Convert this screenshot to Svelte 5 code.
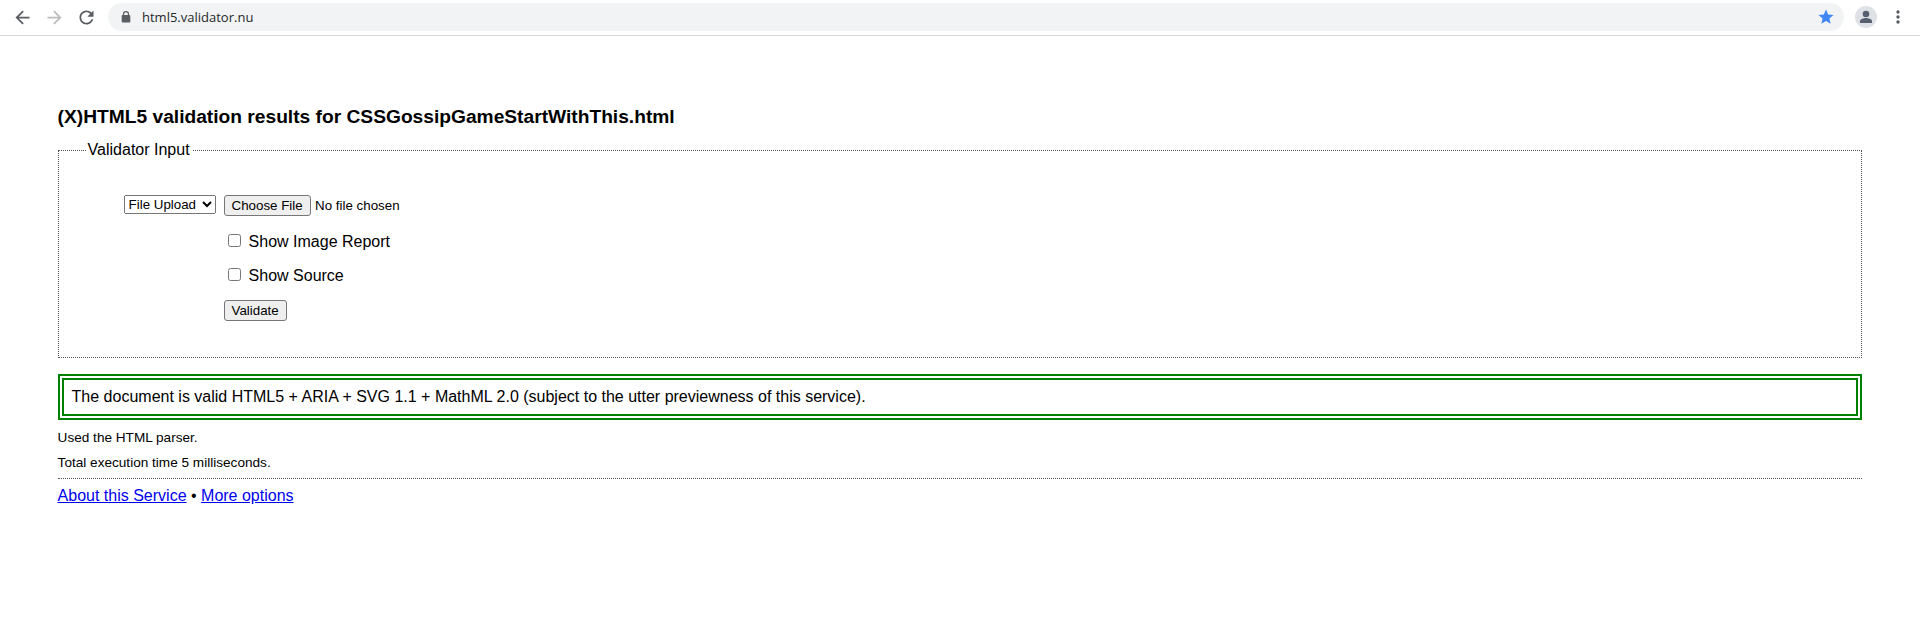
<script>
  let mode = $state('File Upload');
  let imageReport = $state(false);
  let source = $state(false);
</script>

<header class="toolbar">
  <svg class="nav" viewBox="0 0 24 24"><path d="M20 11H7.83l5.59-5.59L12 4l-8 8 8 8 1.41-1.41L7.83 13H20v-2z" /></svg>
  <svg class="nav off" viewBox="0 0 24 24"><path d="M12 4l-1.41 1.41L16.17 11H4v2h12.17l-5.58 5.59L12 20l8-8z" /></svg>
  <svg class="nav" viewBox="0 0 24 24"><path d="M17.65 6.35C16.2 4.9 14.21 4 12 4c-4.42 0-7.99 3.58-7.99 8s3.57 8 7.99 8c3.73 0 6.84-2.55 7.73-6h-2.08c-.82 2.33-3.04 4-5.65 4-3.31 0-6-2.69-6-6s2.69-6 6-6c1.66 0 3.14.69 4.22 1.78L13 11h7V4l-2.35 2.35z" /></svg>
  <div class="omnibox">
    <svg class="lock" viewBox="0 0 10 12"><path d="M1.9 4V3.2a3.1 3.1 0 0 1 6.2 0V4H8.4A.9.9 0 0 1 9.3 4.9v5.7a.9.9 0 0 1-.9.9H1.6a.9.9 0 0 1-.9-.9V4.900a.9.9 0 0 1 .9-.9zM3.100 4h3.800V3.200a1.900 1.900 0 0 0-3.800 0z" /></svg>
    <span class="url">html5.validator.nu</span>
    <svg class="star" viewBox="0 0 24 24"><path d="M12 17.27L18.18 21l-1.64-7.03L22 9.24l-7.19-.61L12 2 9.19 8.63 2 9.24l5.46 4.73L5.82 21z" /></svg>
  </div>
  <svg class="avatar" viewBox="0 0 22 22">
    <circle cx="11" cy="11" r="11" fill="#dee1e6" />
    <circle cx="11" cy="8" r="3.3" fill="#56606f" />
    <path d="M5 17v-1.900C5 12.900 9 12 11 12s6 .9 6 3.100V17z" fill="#56606f" />
  </svg>
  <svg class="more" viewBox="0 0 4 14"><circle cx="2" cy="2" r="1.7" /><circle cx="2" cy="7" r="1.7" /><circle cx="2" cy="12" r="1.7" /></svg>
</header>

<main>
  <h1>(X)HTML5 validation results for CSSGossipGameStartWithThis.html</h1>

  <fieldset>
    <legend>Validator Input</legend>
    <div class="grid">
      <select bind:value={mode}>
        <option>File Upload</option>
      </select>
      <div class="file"><button type="button">Choose File</button><span>No file chosen</span></div>
      <label class="check"><input type="checkbox" bind:checked={imageReport} /><span>Show Image Report</span></label>
      <label class="check"><input type="checkbox" bind:checked={source} /><span>Show Source</span></label>
      <button class="validate" type="button">Validate</button>
    </div>
  </fieldset>

  <p class="success">The document is valid HTML5 + ARIA + SVG 1.1 + MathML 2.0 (subject to the utter previewness of this service).</p>
  <div class="stats">
    <p>Used the HTML parser.</p>
    <p>Total execution time 5 milliseconds.</p>
  </div>
  <hr />
  <p class="links"><a href="#about">About this Service</a> • <a href="#more">More options</a></p>
</main>

<style>
  :global(body) {
    background: #fff;
    color: #000;
    font-family: 'Liberation Sans', Arial, sans-serif;
    font-size: 16px;
  }
  .toolbar {
    display: flex;
    align-items: center;
    box-sizing: border-box;
    height: 36px;
    padding: 0 12px 1px 11.5px;
    border-bottom: 1px solid #d9dbde;
    fill: #5a5e63;
  }
  .nav {
    width: 21px;
    height: 21px;
    margin-right: 11px;
  }
  .nav.off {
    fill: #babcbe;
  }
  .omnibox {
    display: flex;
    align-items: center;
    flex: 1;
    box-sizing: border-box;
    height: 28px;
    margin-left: 0.5px;
    padding: 0 9px 0 13px;
    border-radius: 14px;
    background: #f1f3f4;
  }
  .lock {
    width: 10px;
    height: 12px;
    margin-right: 11px;
  }
  .url {
    flex: 1;
    color: #26282b;
    font: 13px/18px 'Open Sans', 'Noto Sans', sans-serif;
  }
  .star {
    width: 18px;
    height: 18px;
    fill: #4285f4;
  }
  .avatar {
    width: 22px;
    height: 22px;
    margin: 0 19px 0 11px;
  }
  .more {
    width: 4px;
    height: 14px;
    margin-right: 8px;
  }
  main {
    padding: 69px 3% 0;
  }
  h1 {
    margin: 0;
    font-size: 19.2px;
    line-height: 24px;
  }
  fieldset {
    box-sizing: border-box;
    height: 217px;
    margin: 12px 0 0;
    padding: 0 0 0 28px;
    border: 1px dotted #555;
  }
  legend {
    padding: 0 2px 0 1px;
    line-height: 18px;
  }
  .grid {
    display: grid;
    grid-template-columns: 100px 1fr;
    justify-items: start;
    align-items: start;
    padding: 36px 0 0 37px;
  }
  select {
    width: 92px;
    height: 19px;
    margin: 0;
    font: 13.333px 'Liberation Sans', Arial, sans-serif;
  }
  button {
    box-sizing: border-box;
    height: 21px;
    margin: 0;
    padding: 1px 6px;
    border: 1px solid #767676;
    border-radius: 3px;
    background: #efefef;
    color: #000;
    font: 13.333px/17px 'Liberation Sans', Arial, sans-serif;
  }
  .file {
    display: flex;
    align-items: center;
    gap: 4.500px;
    font-size: 13.333px;
  }
  .file button {
    width: 87px;
  }
  .check,
  .validate {
    grid-column: 2;
  }
  .check {
    display: flex;
    align-items: center;
    height: 18px;
    margin-top: 16px;
  }
  .check input {
    width: 13px;
    height: 13px;
    margin: 0 8px 1px 4px;
  }
  .check span {
    padding-top: 2px;
  }
  .validate {
    width: 63px;
    margin-top: 16px;
  }
  p {
    margin: 0;
  }
  .success {
    margin-top: 16px;
    padding: 8px;
    border: 6px double green;
    line-height: 18px;
  }
  .stats {
    display: grid;
    gap: 7px;
    margin-top: 9px;
    font-size: 13.6px;
    line-height: 18px;
  }
  hr {
    margin: 6px 0 0;
    border: 0;
    border-top: 1px dotted #555;
  }
  .links {
    margin-top: 8px;
    line-height: 18px;
  }
  a {
    color: #0000ee;
  }
</style>
